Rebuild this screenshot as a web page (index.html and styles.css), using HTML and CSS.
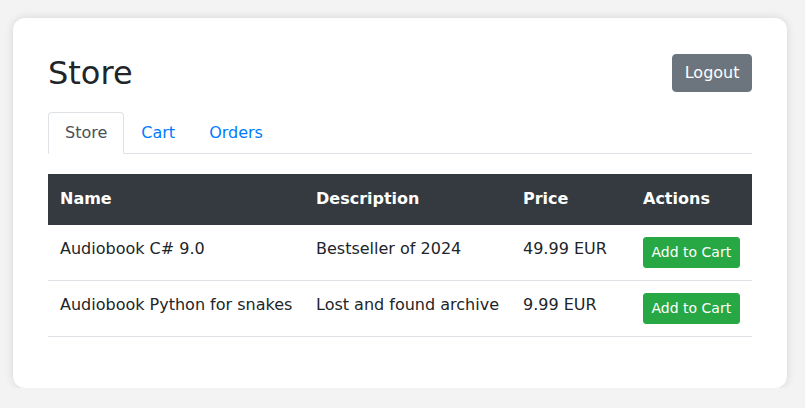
FILE: index.html
```html
<!DOCTYPE html>
<html>
<head>
<meta charset="utf-8">
<link rel="stylesheet" href="styles.css">
</head>
<body>
<div class="card">
  <div class="header">
    <h2 class="title">Store</h2>
    <button class="btn btn-secondary">Logout</button>
  </div>
  <ul class="tabs">
    <li class="tab active">Store</li>
    <li class="tab">Cart</li>
    <li class="tab">Orders</li>
  </ul>
  <table class="table">
    <colgroup>
      <col class="c-name">
      <col class="c-desc">
      <col class="c-price">
      <col class="c-act">
    </colgroup>
    <thead>
      <tr>
        <th>Name</th>
        <th>Description</th>
        <th>Price</th>
        <th>Actions</th>
      </tr>
    </thead>
    <tbody>
      <tr>
        <td>Audiobook C# 9.0</td>
        <td>Bestseller of 2024</td>
        <td>49.99 EUR</td>
        <td><button class="btn btn-sm btn-success">Add to Cart</button></td>
      </tr>
      <tr>
        <td>Audiobook Python for snakes</td>
        <td>Lost and found archive</td>
        <td>9.99 EUR</td>
        <td><button class="btn btn-sm btn-success">Add to Cart</button></td>
      </tr>
    </tbody>
  </table>
</div>
</body>
</html>
```
FILE: styles.css
```css
* { box-sizing: border-box; }
html, body { margin: 0; padding: 0; }
body {
  background: #f3f3f3;
  font-family: "DejaVu Sans", sans-serif;
  font-size: 16px;
  line-height: 1.5;
  color: #212529;
  padding: 18px 18px 0 13px;
}
.card {
  width: 774px;
  background: #fff;
  border-radius: 12px;
  box-shadow: 0 0 10px rgba(0,0,0,0.12);
  padding: 35px 35px 35px 35px;
}
.header {
  display: flex;
  justify-content: space-between;
  align-items: center;
  height: 40px;
  margin-bottom: 19px;
}
.title {
  margin: 0;
  font-size: 32px;
  font-weight: 500;
  line-height: 1.2;
}
.btn {
  font-family: "DejaVu Sans", sans-serif;
  border: 1px solid transparent;
  border-radius: 4px;
  font-size: 16px;
  line-height: 1.5;
  padding: 6px 12px;
  color: #fff;
  cursor: pointer;
  white-space: nowrap;
}
.btn-secondary { background: #6c757d; border-color: #6c757d; padding: 6px 11.5px; }
.btn-sm { font-size: 14px; padding: 4px 7.5px; border-radius: 3px; }
.btn-success { background: #28a745; border-color: #28a745; }
.tabs {
  display: flex;
  list-style: none;
  margin: 0 0 20px 0;
  padding: 0;
  border-bottom: 1px solid #dee2e6;
}
.tab {
  padding: 8px 16px;
  border: 1px solid transparent;
  border-top-left-radius: 4px;
  border-top-right-radius: 4px;
  margin-bottom: -1px;
  color: #007bff;
}
.tab.active {
  color: #495057;
  background: #fff;
  border-color: #dee2e6 #dee2e6 #fff;
}
.table {
  width: 100%;
  table-layout: fixed;
  border-collapse: collapse;
  margin-bottom: 16px;
}
.table th, .table td {
  padding: 12px;
  text-align: left;
  vertical-align: top;
  white-space: nowrap;
  border-top: 1px solid #dee2e6;
}
.table thead th {
  background: #343a40;
  color: #fff;
  font-weight: bold;
  border-top: 1px solid #343a40;
  border-bottom: 2px solid #343a40;
  vertical-align: bottom;
}
.table tbody tr:last-child td { border-bottom: 1px solid #dee2e6; }
.table tbody tr:first-child td { border-top: 0; }
.c-name { width: 256px; }
.c-desc { width: 207px; }
.c-price { width: 120px; }
.c-act { width: 121px; }
```
